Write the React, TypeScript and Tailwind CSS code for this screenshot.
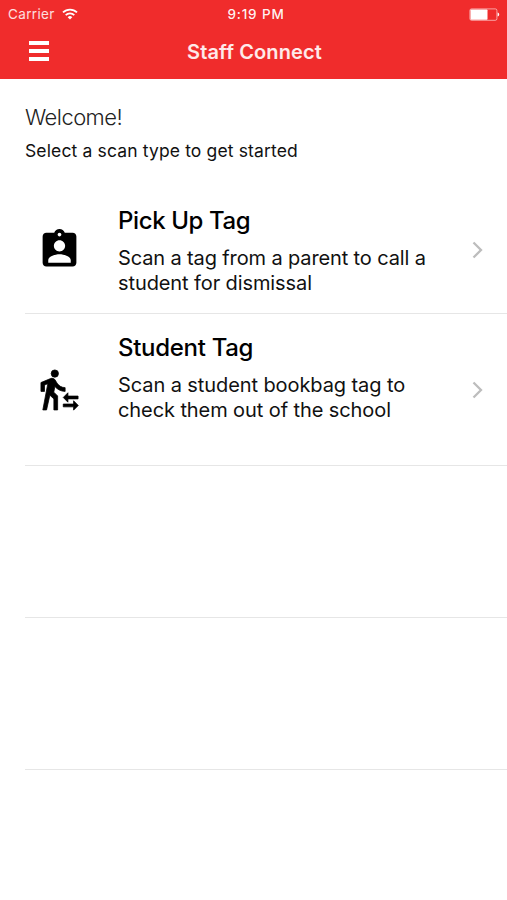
import { MdAssignmentInd } from "react-icons/md"

function WalkIcon({ size, className }: { size: number; className?: string }) {
  return (
    <svg
      width={size}
      height={size}
      viewBox="0 0 24 24"
      fill="black"
      stroke="black"
      strokeWidth="0.4"
      strokeLinejoin="round"
      className={className}
    >
      <circle cx="9.5" cy="3.5" r="1.95" />
      <path d="M5.75 8.9 3.100 22.900h2l1.750-7.900L9 17v5.900h2v-7.450L8.950 13.400l.6-3C10.850 12 12.800 13 15 13v-2c-1.850 0-3.450-1-4.350-2.450l-.95-1.600C9.350 6.350 8.700 6 8 6c-.25 0-.5.05-.75.15L2.100 8.300V13H4V9.650z" />
      <path d="M16.490 15.500v-1.750L14 16.250l2.490 2.500V17H21.900v-1.500z" />
      <path d="M19.510 19.750H14v1.500h5.510V23L22 20.500 19.510 18z" />
    </svg>
  )
}

const rows = [
  {
    title: "Pick Up Tag",
    titleClass: "tracking-[-0.38px]",
    lines: [
      { text: "Scan a tag from a parent to call a", className: "tracking-[-0.13px]" },
      { text: "student for dismissal", className: "tracking-[-0.1px]" }
    ],
    icon: MdAssignmentInd,
    height: "h-[127px]",
    iconClass: "mt-[40px]",
    chevronClass: "mt-[54px]"
  },
  {
    title: "Student Tag",
    titleClass: "tracking-[-0.3px]",
    lines: [
      { text: "Scan a student bookbag tag to", className: "tracking-[-0.09px]" },
      { text: "check them out of the school", className: "tracking-[-0.09px]" }
    ],
    icon: WalkIcon,
    height: "h-[152px]",
    iconClass: "mt-[53px]",
    chevronClass: "mt-[67px]"
  }
]

function StatusBar() {
  return (
    <div className="grid grid-cols-[1fr_auto_1fr] items-center h-[27px] pl-[8px] pr-[7px] text-[13.5px] leading-[27px]">

      <div className="flex items-center gap-[7px]">
        <span className="tracking-[0.35px] text-white/85">Carrier</span>
        <svg width="16" height="12" viewBox="0 0 16 12" fill="none" stroke="white" strokeWidth="1.8">
          <path d="M1 4.4a10 10 0 0 1 14 0" />
          <path d="M3.7 7.1a6.1 6.1 0 0 1 8.6 0" />
          <path d="M8 11.6 5.7 9.2a3.3 3.3 0 0 1 4.6 0z" fill="white" stroke="none" />
        </svg>
      </div>

      <span className="ml-[4px] pt-[1px] font-medium tracking-[0.85px] text-white/95">9:19 PM</span>

      <svg className="justify-self-end" width="31" height="13" viewBox="0 0 31 13">
        <rect x="0.9" y="0.9" width="27" height="11.4" rx="1.6" fill="none" stroke="white" strokeOpacity="0.7" strokeWidth="0.8" />
        <rect x="1.5" y="1.4" width="17" height="10.4" rx="0.8" fill="white" />
        <path d="M28.6 4.6c1 .3 1.6 1 1.6 2s-.6 1.7-1.6 2z" fill="white" />
      </svg>

    </div>
  )
}

export default function App() {

  return (
    <div className="min-h-screen overflow-hidden bg-white text-black font-['Inter',sans-serif]">

      {/* ================= HEADER ================= */}
      <header className="h-[79px] bg-[#f02c2c] text-white">

        <StatusBar />

        <div className="grid grid-cols-[1fr_auto_1fr] items-center h-[50px] px-[29px]">
          <button className="-mt-[2px] flex flex-col gap-[4px] w-[20px]" aria-label="Menu">
            <span className="h-[4px] w-[20px] bg-white" />
            <span className="h-[4px] w-[20px] bg-white" />
            <span className="h-[4px] w-[20px] bg-white" />
          </button>
          <h1 className="ml-[2px] text-[20px] font-semibold tracking-[0.12px] text-white/90">Staff Connect</h1>
        </div>

      </header>

      {/* ================= WELCOME ================= */}
      <section className="h-[108px] pl-[25px] pt-[24px]">
        <p className="text-[22px] leading-[28px] font-light text-[#222]">
          <span className="tracking-[-0.55px]">Welcome!</span>
        </p>
        <p className="mt-[8px] text-[17.5px] leading-[24px] text-[#111]">
          <span className="tracking-[0.14px]">Select a scan type to get started</span>
        </p>
      </section>

      {/* ================= SCAN TYPES ================= */}
      <ul className="pl-[25px]">

        {rows.map((r) => {
          const Icon = r.icon

          return (
            <li key={r.title} className={`flex items-start border-b border-[#e6e6e6] ${r.height}`}>

              <Icon size={45} className={`ml-[12px] shrink-0 ${r.iconClass}`} />

              <div className="ml-[36px] flex-1 pt-[18px] whitespace-nowrap">
                <h2 className="text-[24px] leading-[32px] font-medium">
                  <span className={r.titleClass}>{r.title}</span>
                </h2>
                <p className="mt-[9px] text-[20px] leading-[25px] text-[#111]">
                  {r.lines.map((l) => (
                    <span key={l.text} className={`block w-fit ${l.className}`}>{l.text}</span>
                  ))}
                </p>
              </div>

              <svg
                className={`mr-[24px] shrink-0 ${r.chevronClass}`}
                width="11"
                height="18"
                viewBox="0 0 11 18"
                fill="none"
                stroke="#bdbdbd"
                strokeWidth="2.3"
              >
                <path d="M1.5 1.5 9 9l-7.500 7.500" />
              </svg>

            </li>
          )
        })}

        <li className="h-[152px] border-b border-[#e6e6e6]" />
        <li className="h-[152px] border-b border-[#e6e6e6]" />

      </ul>

    </div>
  )
}
